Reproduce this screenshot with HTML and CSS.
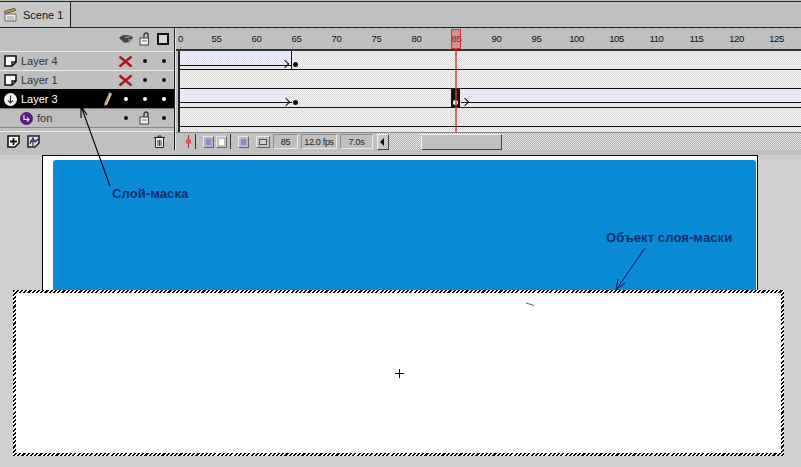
FILE: index.html
```html
<!DOCTYPE html>
<html lang="ru">
<head>
<meta charset="utf-8">
<title>Timeline</title>
<link rel="stylesheet" href="styles.css">
</head>
<body>
<svg class="defs" width="0" height="0" aria-hidden="true">
  <symbol id="page" viewBox="0 0 13 12"><path d="M1 1h11v6l-4 4H1z" fill="#fff" stroke="#111" stroke-width="1.6"/><path d="M8 11V7h4" fill="none" stroke="#111" stroke-width="1.4"/></symbol>
  <symbol id="cross" viewBox="0 0 15 13"><path d="M1.5 1.5l12 10M13.5 1.5l-12 10" stroke="#b5141e" stroke-width="2.4" fill="none"/></symbol>
  <symbol id="lock" viewBox="0 0 11 14"><path d="M5 6V3a2 2 0 0 1 4 0v3" fill="none" stroke="#333" stroke-width="1.300"/><rect x="1" y="6" width="8.500" height="7" fill="#f6f2dc" stroke="#444"/><path d="M3 9h5" stroke="#777"/></symbol>
</svg>

<div class="app">
  <header class="scenebar">
    <div class="tab">
      <svg class="clapper" width="13" height="14" viewBox="0 0 13 14"><path d="M1 6h11v7H1z" fill="#f2f0e4" stroke="#666"/><path d="M1 5.500l10.500-3-.8-2.200L.5 3.300z" fill="#d8b030" stroke="#554"/><path d="M3 9h7M3 11h7" stroke="#999"/></svg>
      <span>Scene 1</span>
    </div>
  </header>

  <section class="timeline">
    <div class="layers">
      <div class="layers-head">
        <svg class="eye" width="15" height="9" viewBox="0 0 15 9"><path d="M0 3c4-4 9-4 14-1-1 4-6 7-10 5C3 5 1 4 0 3z" fill="#444"/><path d="M6 2h5M9 5h4" stroke="#aaa"/></svg>
        <svg class="head-lock" width="11" height="14"><use href="#lock"/></svg>
        <span class="outline-box"></span>
      </div>

      <div class="layer">
        <svg class="ico" width="13" height="12"><use href="#page"/></svg>
        <span class="name">Layer 4</span>
        <span class="cell"><svg width="15" height="13"><use href="#cross"/></svg></span>
        <span class="cell"><i class="pt"></i></span>
        <span class="cell"><i class="pt"></i></span>
      </div>
      <div class="layer">
        <svg class="ico" width="13" height="12"><use href="#page"/></svg>
        <span class="name">Layer 1</span>
        <span class="cell"><svg width="15" height="13"><use href="#cross"/></svg></span>
        <span class="cell"><i class="pt"></i></span>
        <span class="cell"><i class="pt"></i></span>
      </div>
      <div class="layer active">
        <svg class="ico" width="13" height="13" viewBox="0 0 13 13"><circle cx="6.500" cy="6.500" r="6.500" fill="#f4f0f4"/><path d="M6.500 2.500v7M4 7.500l2.500 2.500L9 7.500" fill="none" stroke="#333" stroke-width="1.100"/></svg>
        <span class="name">Layer 3</span>
        <svg class="pencil" width="8" height="14" viewBox="0 0 9 15"><path d="M6 0l3 1.500L3.500 14 .5 15 .8 11.500z" fill="#d8c8a0"/><path d="M6 1L2 12" stroke="#907840"/></svg>
        <span class="cell"><i class="pt"></i></span>
        <span class="cell"><i class="pt"></i></span>
        <span class="cell"><i class="pt"></i></span>
      </div>
      <div class="layer child">
        <svg class="ico" width="13" height="13" viewBox="0 0 13 13"><circle cx="6.500" cy="6.500" r="6.500" fill="#5a1a80"/><path d="M4 3v4.500h5M7 5.500l2 2-2 2" fill="none" stroke="#f0e8f4" stroke-width="1.200"/></svg>
        <span class="name">fon</span>
        <span class="cell"><i class="pt"></i></span>
        <span class="cell"><svg width="11" height="14"><use href="#lock"/></svg></span>
        <span class="cell"><i class="pt"></i></span>
      </div>

      <div class="layers-gap"></div>
      <div class="layers-foot">
        <svg width="13" height="13" viewBox="0 0 13 13"><path d="M1 1h11v7l-4 4H1z" fill="#fff" stroke="#111" stroke-width="1.600"/><path d="M6.500 3v7M3 6.500h7" stroke="#111" stroke-width="1.800"/></svg>
        <svg width="13" height="13" viewBox="0 0 13 13"><path d="M1 1h11v7l-4 4H1z" fill="#dcdcf0" stroke="#223" stroke-width="1.600"/><path d="M3 9l3-6 2 4 3-3M3 6h7M6 6v5" fill="none" stroke="#224" stroke-width="1.100"/></svg>
        <svg class="trash" width="11" height="13" viewBox="0 0 11 13"><path d="M0 2.500h11M4 2.500V1h3v1.500" fill="none" stroke="#222"/><path d="M1.500 3v9.500h8V3" fill="#eee" stroke="#222"/><path d="M4 5v6M5.500 5v6M7 5v6" stroke="#444"/></svg>
      </div>
    </div>

    <div class="frames">
      <div class="ruler">
        <span class="tick first">0</span>
        <span class="tick">55</span><span class="tick">60</span><span class="tick">65</span>
        <span class="tick">70</span><span class="tick">75</span><span class="tick">80</span>
        <span class="tick">85</span><span class="tick">90</span><span class="tick">95</span>
        <span class="tick">100</span><span class="tick">105</span><span class="tick">110</span>
        <span class="tick">115</span><span class="tick">120</span><span class="tick">125</span>
      </div>
      <div class="rows">
        <div class="row">
          <div class="tween fixed closed"></div>
          <i class="kdot"></i>
        </div>
        <div class="row"></div>
        <div class="row">
          <div class="tween fixed"></div>
          <i class="kdot"></i>
          <div class="key"><i></i></div>
          <div class="tween open"></div>
        </div>
        <div class="row"></div>
        <div class="row-gap"></div>
      </div>
      <div class="controls">
        <svg class="onion-mark" width="7" height="13" viewBox="0 0 7 13"><path d="M3.500 0v13" stroke="#c02030"/><path d="M1 4.500h5v4H1z" fill="#e05060"/></svg>
        <span class="sep"></span>
        <span class="btn violet"></span>
        <span class="btn pale"></span>
        <span class="sep"></span>
        <span class="btn violet2"></span>
        <span class="btn brackets"></span>
        <span class="readout w-frame">85</span>
        <span class="readout w-fps">12.0 fps</span>
        <span class="readout w-time">7.0s</span>
        <div class="scroll">
          <span class="arrow-btn"></span>
          <span class="thumb"></span>
        </div>
      </div>
      <div class="playhead"></div>
      <div class="playhead-box"></div>
    </div>
  </section>

  <div class="gutter"></div>

  <main class="work">
    <div class="stage"><div class="blue"></div></div>
    <div class="selection"><div class="selection-fill"></div></div>
  </main>

  <svg class="overlay" width="801" height="467" viewBox="0 0 801 467">
    <path d="M110 186L81 106M81 106l0 12M81 106l6 9" fill="none" stroke="#000" stroke-width="1.100"/>
    <path d="M645 248L616 290M616 290l2-11M616 290l9-7" fill="none" stroke="#0a1060" stroke-width="1"/>
    <path d="M526 303l8 2.500" stroke="#3a7a8a" stroke-width="1.200"/>
    <path d="M399.500 369v9M395 373.500h9" stroke="#111" stroke-width="1"/>
  </svg>
  <span class="note note-layer">Слой-маска</span>
  <span class="note note-object">Объект слоя-маски</span>
</div>
</body>
</html>
```

FILE: styles.css
```css
* { box-sizing: border-box; }

html, body { margin: 0; padding: 0; }

body {
  width: 801px;
  height: 467px;
  overflow: hidden;
  font-family: "Liberation Sans", Arial, sans-serif;
  background: #c0c0c0;
}

.defs { position: absolute; }

.app {
  position: relative;
  width: 801px;
  height: 467px;
  padding-top: 1px;
  display: flex;
  flex-direction: column;
  overflow: hidden;
  background: #c0c0c0;
}

/* scene bar */
.scenebar {
  height: 27px;
  flex: none;
  border-top: 1px solid #222;
  border-bottom: 1px solid #222;
  display: flex;
  background: #c0c0c0;
}

.tab {
  width: 71px;
  display: flex;
  align-items: center;
  gap: 6px;
  padding-left: 4px;
  border-right: 1px solid #222;
  background: #c8c8c8;
  font-size: 11px;
  color: #111;
}

/* timeline */
.timeline {
  height: 122px;
  flex: none;
  display: flex;
}

.layers {
  width: 175px;
  flex: none;
  display: flex;
  flex-direction: column;
  border-right: 1px solid #222;
}

.layers-head {
  height: 23px;
  flex: none;
  display: flex;
  align-items: center;
  justify-content: flex-end;
  padding: 0 5px 1px 0;
}

.eye { margin-right: 5px; }
.head-lock { margin-right: 7px; }

.outline-box {
  width: 12px;
  height: 12px;
  border: 2px solid #111;
  background: #d8d8d8;
}

.layer {
  height: 19px;
  flex: none;
  display: flex;
  align-items: center;
  border-top: 1px solid #ececec;
  padding: 0 1px 0 4px;
  background: #bebebe;
  font-size: 11px;
  color: #333;
}

.ico { flex: none; }

.name {
  flex: 1;
  margin-left: 4px;
}

.layer.active {
  background: #000;
  border-top-color: #000;
  color: #fff;
}

.layer.child {
  padding-left: 20px;
  border-top-color: #777;
}

.pencil { margin-right: 4px; }

.cell {
  width: 19px;
  flex: none;
  display: flex;
  justify-content: center;
  align-items: center;
}

.pt {
  width: 4px;
  height: 4px;
  border-radius: 50%;
  background: #111;
}

.active .pt { background: #fff; }

.layers-gap {
  height: 5px;
  flex: none;
  border-top: 1px solid #888;
  border-bottom: 1px solid #f0f0f0;
}

.layers-foot {
  height: 18px;
  flex: none;
  display: flex;
  align-items: center;
  gap: 7px;
  padding-left: 7px;
}

.trash { margin-left: auto; margin-right: 9px; }

/* frames */
.frames {
  position: relative;
  flex: 1;
  min-width: 0;
  display: flex;
  flex-direction: column;
  border-left: 1px solid #e4e4e4;
}

.ruler {
  height: 23px;
  flex: none;
  display: flex;
  align-items: center;
  padding-bottom: 1px;
  border-bottom: 2px solid #333;
  background:
    repeating-linear-gradient(90deg, #999 0 1px, transparent 1px 8px) 4px 0 / 100% 2px no-repeat,
    repeating-linear-gradient(90deg, #999 0 1px, transparent 1px 8px) 4px 100% / 100% 2px no-repeat,
    #c0c0c0;
  font-size: 9.500px;
  letter-spacing: -0.4px;
  color: #111;
}

.tick {
  width: 40px;
  flex: none;
  text-align: center;
}

.tick.first {
  width: 20.500px;
  padding-left: 2px;
  text-align: left;
}

.rows {
  flex: 1;
  margin-left: 2px;
  border-left: 2px solid #222;
  display: flex;
  flex-direction: column;
  background: repeating-conic-gradient(#dcdcdc 0 25%, #f2f2f2 0 50%) 0 0 / 2px 2px;
}

.row {
  height: 19px;
  flex: none;
  display: flex;
  align-items: flex-start;
  border-bottom: 1px solid #111;
}

.row-gap { flex: 1; }

.tween {
  position: relative;
  height: 14px;
  border-bottom: 1px solid #111;
  background: repeating-conic-gradient(#dedef2 0 25%, #f2f2ff 0 50%) 0 0 / 2px 2px;
}

.tween.fixed { width: 112px; flex: none; }

.tween.closed {
  height: 18px;
  background: none;
  border-bottom: 0;
  border-right: 1px solid #111;
}

.tween.closed::before {
  content: "";
  display: block;
  height: 14px;
  border-bottom: 1px solid #111;
  background: repeating-conic-gradient(#dedef2 0 25%, #f2f2ff 0 50%) 0 0 / 2px 2px;
}

.tween.fixed::after {
  content: "";
  position: absolute;
  right: 3px;
  top: 10px;
  width: 5px;
  height: 5px;
  border-top: 1px solid #111;
  border-right: 1px solid #111;
  transform: rotate(45deg);
}

.tween.open { flex: 1; margin-left: 1px; }

.tween.open::after {
  content: "";
  position: absolute;
  left: 1px;
  top: 10px;
  width: 5px;
  height: 5px;
  border-top: 1px solid #111;
  border-right: 1px solid #111;
  transform: rotate(45deg);
}

.kdot {
  flex: none;
  width: 5px;
  height: 5px;
  margin: 11px 0 0 1px;
  border-radius: 50%;
  background: #111;
}

.key {
  width: 9px;
  height: 18px;
  flex: none;
  margin-left: 153px;
  display: flex;
  justify-content: center;
  padding-top: 11px;
  background: #111;
}

.key i {
  width: 5px;
  height: 5px;
  border-radius: 50%;
  background: #fff;
}

.controls {
  height: 18px;
  flex: none;
  display: flex;
  align-items: center;
  border-top: 1px solid #888;
  background: #c0c0c0;
  font-size: 9px;
  letter-spacing: -0.3px;
  color: #222;
}

.onion-mark { margin-left: 9px; }

.sep {
  width: 1px;
  height: 15px;
  margin: 0 7px 0 3px;
  background: #333;
}

.btn {
  width: 11px;
  height: 12px;
  margin-right: 2px;
  flex: none;
  border: 1px solid #e8e8e8;
  border-right-color: #666;
  border-bottom-color: #666;
}

.btn.violet { background: #8c8cc8; box-shadow: inset 0 0 0 2px #b0b0c8; }
.btn.pale { background: #fff; box-shadow: inset 0 0 0 2px #c0c0c0; margin-right: 0; }
.btn.violet2 { background: #8c8cc4; box-shadow: inset 0 0 0 2px #b8b8d0; margin-right: 7px; }
.btn.brackets { width: 14px; margin-right: 3px; background: #cfcfcf; box-shadow: inset 0 0 0 2px #c0c0c0, inset 0 0 0 3px #555; }

.readout {
  flex: none;
  height: 15px;
  line-height: 14px;
  text-align: center;
  border: 1px solid #e8e8e8;
  border-top-color: #909090;
  border-left-color: #909090;
  margin-right: 3px;
}

.w-frame { width: 25px; }
.w-fps { width: 36px; }
.w-time { width: 33px; margin-right: 4px; }

.scroll {
  flex: 1;
  height: 17px;
  display: flex;
  align-items: center;
  background: repeating-conic-gradient(#b0b0b0 0 25%, #e8e8e8 0 50%) 0 0 / 2px 2px;
}

.arrow-btn {
  width: 12px;
  height: 16px;
  flex: none;
  position: relative;
  background: #c8c8c8;
  border-right: 1px solid #444;
  border-bottom: 1px solid #444;
  border-top: 1px solid #f0f0f0;
  border-left: 1px solid #f0f0f0;
}

.arrow-btn::after {
  content: "";
  position: absolute;
  left: 2px;
  top: 3px;
  border: 4px solid transparent;
  border-left-width: 0;
  border-right-color: #111;
}

.thumb {
  width: 81px;
  height: 16px;
  margin-left: 32px;
  flex: none;
  background: #c0c0c0;
  border-top: 1px solid #f0f0f0;
  border-left: 1px solid #f0f0f0;
  border-right: 1px solid #444;
  border-bottom: 1px solid #444;
}

.playhead {
  position: absolute;
  left: 279px;
  top: 21px;
  width: 2px;
  height: 83px;
  background: rgba(205, 50, 50, 0.7);
}

.playhead-box {
  position: absolute;
  left: 275px;
  top: 1px;
  width: 10px;
  height: 20px;
  border: 1px solid #e03030;
  background: rgba(255, 70, 80, 0.4);
}

/* stage */
.gutter {
  height: 5px;
  flex: none;
  background: #c0c0c0;
}

.work {
  position: relative;
  flex: 1;
  padding-left: 42px;
  background: #cfcfcf;
  overflow: hidden;
}

.stage {
  width: 716px;
  height: 300px;
  padding: 4px 1px 0 10px;
  border: 1px solid #000;
  border-bottom: 0;
  background: #fff;
}

.blue {
  height: 200px;
  border-radius: 3px 3px 0 0;
  background: #0a8bd8;
}

.selection {
  position: absolute;
  left: 13px;
  top: 135px;
  width: 771px;
  height: 166px;
  padding: 3px;
  background: repeating-linear-gradient(135deg, #000 0 1.500px, #fff 1.500px 3px);
}

.selection-fill {
  height: 100%;
  background: #fff;
}

/* annotations */
.overlay {
  position: absolute;
  left: 0;
  top: 0;
  pointer-events: none;
}

.note {
  position: absolute;
  font-size: 13px;
  font-weight: 700;
  letter-spacing: 0.1px;
  color: #0a2f6c;
  white-space: nowrap;
}

.note-layer { left: 112px; top: 186px; }
.note-object { left: 606px; top: 230px; }
```
